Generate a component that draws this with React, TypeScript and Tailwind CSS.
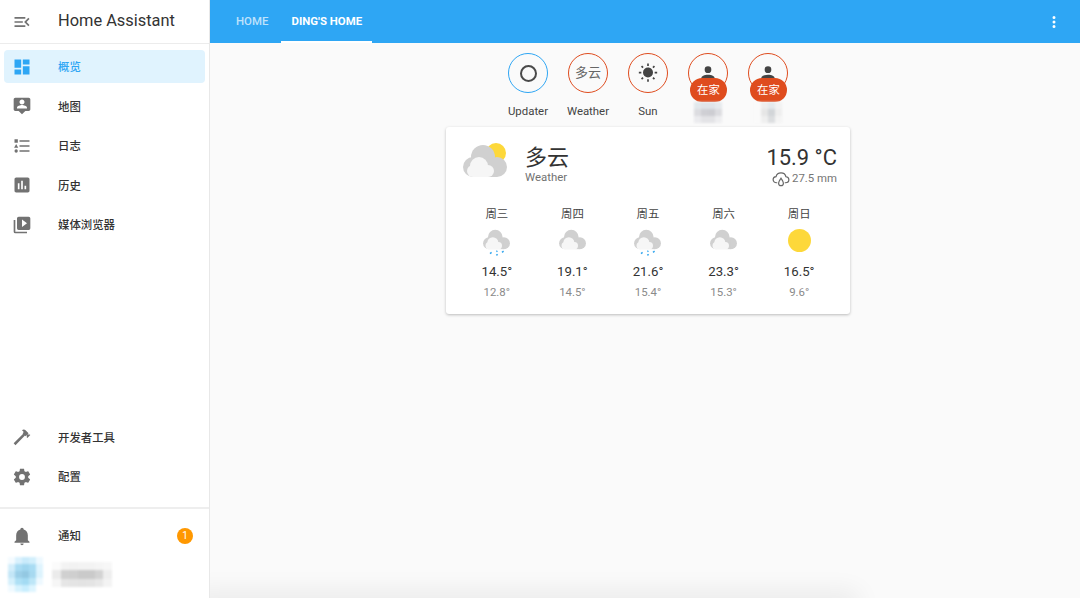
import React from "react";

const FONT = "font-['Roboto','Noto_Sans_CJK_SC',sans-serif]";

const ICONS = {
  menuOpen: "M21,15.61L19.59,17L14.58,12L19.59,7L21,8.39L17.44,12L21,15.61M3,6H16V8H3V6M3,13V11H13V13H3M3,18V16H16V18H3Z",
  dashboard: "M13,3V9H21V3M13,21H21V11H13M3,21H11V15H3M3,13H11V3H3V13Z",
  map: "M20 2H4C2.9 2 2 2.9 2 4V16C2 17.1 2.9 18 4 18H8L12 22L16 18H20C21.1 18 22 17.1 22 16V4C22 2.9 21.1 2 20 2M12 4.3C13.66 4.3 15 5.64 15 7.3C15 8.96 13.66 10.3 12 10.3C10.34 10.3 9 8.96 9 7.3C9 5.64 10.34 4.3 12 4.3M18 15H6V14C6 12 10 10.9 12 10.9C14 10.9 18 12 18 14V15Z",
  logbook: "M5,9.5L7.5,14H2.5L5,9.5M3,4H7V8H3V4M5,20A2,2 0 0,0 7,18A2,2 0 0,0 5,16A2,2 0 0,0 3,18A2,2 0 0,0 5,20M9,5V7H21V5H9M9,19H21V17H9V19M9,13H21V11H9V13Z",
  history: "M19 3H5C3.9 3 3 3.9 3 5V19C3 20.1 3.9 21 5 21H19C20.1 21 21 20.1 21 19V5C21 3.9 20.1 3 19 3M9 17H7V10H9V17M13 17H11V7H13V17M17 17H15V13H17V17Z",
  media: "M4,6H2V20A2,2 0 0,0 4,22H18V20H4V6M20,2H8A2,2 0 0,0 6,4V16A2,2 0 0,0 8,18H20A2,2 0 0,0 22,16V4A2,2 0 0,0 20,2M12,14.5V5.5L18,10L12,14.5Z",
  hammer: "M2 19.63L13.43 8.2L12.72 7.5L14.14 6.07L12 3.89C13.2 2.7 15.09 2.7 16.27 3.89L19.87 7.5L18.45 8.91H21.29L22 9.62L18.45 13.21L17.74 12.5V9.62L16.27 11.04L15.56 10.33L4.13 21.76L2 19.63Z",
  cog: "M12,15.5A3.5,3.5 0 0,1 8.5,12A3.5,3.5 0 0,1 12,8.5A3.5,3.5 0 0,1 15.5,12A3.5,3.5 0 0,1 12,15.5M19.43,12.97C19.47,12.65 19.5,12.33 19.5,12C19.5,11.67 19.47,11.34 19.43,11L21.54,9.37C21.73,9.22 21.78,8.95 21.66,8.73L19.66,5.27C19.54,5.05 19.27,4.96 19.05,5.05L16.56,6.05C16.04,5.66 15.5,5.32 14.87,5.07L14.5,2.42C14.46,2.18 14.25,2 14,2H10C9.75,2 9.54,2.18 9.5,2.42L9.13,5.07C8.5,5.32 7.96,5.66 7.44,6.05L4.95,5.05C4.73,4.96 4.46,5.05 4.34,5.27L2.34,8.73C2.21,8.95 2.27,9.22 2.46,9.37L4.57,11C4.53,11.34 4.5,11.67 4.5,12C4.5,12.33 4.53,12.65 4.57,12.97L2.46,14.63C2.27,14.78 2.21,15.05 2.34,15.27L4.34,18.73C4.46,18.95 4.73,19.03 4.95,18.95L7.44,17.94C7.96,18.34 8.5,18.68 9.13,18.93L9.5,21.58C9.54,21.82 9.75,22 10,22H14C14.25,22 14.46,21.82 14.5,21.58L14.87,18.93C15.5,18.67 16.04,18.34 16.56,17.94L19.05,18.95C19.27,19.03 19.54,18.95 19.66,18.73L21.66,15.27C21.78,15.05 21.73,14.78 21.54,14.63L19.43,12.97Z",
  bell: "M21,19V20H3V19L5,17V11C5,7.9 7.03,5.17 10,4.29C10,4.19 10,4.1 10,4A2,2 0 0,1 12,2A2,2 0 0,1 14,4C14,4.1 14,4.19 14,4.29C16.97,5.17 19,7.9 19,11V17L21,19M14,21A2,2 0 0,1 12,23A2,2 0 0,1 10,21",
  dots: "M12,16A2,2 0 0,1 14,18A2,2 0 0,1 12,20A2,2 0 0,1 10,18A2,2 0 0,1 12,16M12,10A2,2 0 0,1 14,12A2,2 0 0,1 12,14A2,2 0 0,1 10,12A2,2 0 0,1 12,10M12,4A2,2 0 0,1 14,6A2,2 0 0,1 12,8A2,2 0 0,1 10,6A2,2 0 0,1 12,4Z",
  sun: "M3.55,18.54L4.96,19.95L6.76,18.16L5.34,16.74M11,22.45C11.32,22.45 13,22.45 13,22.45V19.5H11M12,5.5A6,6 0 0,0 6,11.5A6,6 0 0,0 12,17.5A6,6 0 0,0 18,11.5C18,8.18 15.31,5.5 12,5.5M20,12.5H23V10.5H20M17.24,18.16L19.04,19.95L20.45,18.54L18.66,16.74M20.45,4.46L19.04,3.05L17.24,4.84L18.66,6.26M13,0.55H11V3.5H13M4,10.5H1V12.5H4M6.76,4.84L4.96,3.05L3.55,4.46L5.34,6.26L6.76,4.84Z",
  account: "M12,4A4,4 0 0,1 16,8A4,4 0 0,1 12,12A4,4 0 0,1 8,8A4,4 0 0,1 12,4M12,14C16.42,14 20,15.79 20,18V20H4V18C4,15.79 7.58,14 12,14Z",
};

function Icon({ d, className }: { d: string; className: string }) {
  return (
    <svg viewBox="0 0 24 24" className={className} fill="currentColor">
      <path d={d} />
    </svg>
  );
}

function NavRow({ icon, label, active, children }: { icon: string; label: string; active?: boolean; children?: React.ReactNode }) {
  return (
    <div className={`mx-1 flex h-[33px] items-center rounded-[4px] pl-[8px] pr-3 ${active ? "bg-[#e0f3fe] text-[#2ea6f4]" : "text-[#333333]"}`}>
      <Icon d={icon} className={`h-5 w-5 shrink-0 ${active ? "text-[#2ea6f4]" : "text-[#727272]"}`} />
      <span className="ml-[26px] pt-[3px] text-[11.4px] font-medium">{label}</span>
      {children}
    </div>
  );
}

// blurred-out text and avatars, built from coarse cells
function Mosaic({ cells, size, className }: { cells: string[][]; size: number; className?: string }) {
  return (
    <div className={`flex flex-col blur-[1px] ${className ?? ""}`}>
      {cells.map((row, y) => (
        <div key={y} className="flex">
          {row.map((c, x) => (
            <div key={x} style={{ width: size, height: size, background: c }} />
          ))}
        </div>
      ))}
    </div>
  );
}

function Cloud({ sun, className }: { sun?: boolean; className: string }) {
  return (
    <svg viewBox="0 0 44 36" className={className}>
      {sun && <circle cx="33" cy="11" r="10" fill="#fdd83a" />}
      <g fill="#d0d0d0">
        <circle cx="20" cy="15" r="12" />
        <circle cx="10" cy="25" r="10" />
        <circle cx="34" cy="25" r="10" />
        <rect x="10" y="20" width="24" height="15" />
      </g>
      <g fill="#f6f6f6">
        <circle cx="16" cy="24" r="9" />
        <circle cx="10" cy="29" r="6" />
        <circle cx="25" cy="29" r="6" />
        <rect x="10" y="26" width="15" height="9" />
      </g>
      <rect x="0" y="35" width="44" height="1" fill="#ffffff" />
    </svg>
  );
}

function ForecastIcon({ kind }: { kind: "rain" | "cloud" | "sun" }) {
  if (kind === "sun") {
    return (
      <div className="flex h-[30px] items-start justify-center pt-[1px]">
        <div className="h-[23px] w-[23px] rounded-full bg-[#fdd83a]" />
      </div>
    );
  }
  return (
    <div className="flex h-[30px] flex-col items-center">
      <Cloud className="h-[22px] w-[27px]" />
      {kind === "rain" && (
        <svg viewBox="0 0 16 6" className="h-[6px] w-[16px]">
          <path d="M1 3.6L2.6 2.4M7.4 5.4L8.6 4.2M13 2.4L14.6 1.2M7.4 1.6L8.4 0.8" stroke="#35a7ee" strokeWidth="1.5" />
        </svg>
      )}
    </div>
  );
}

function Badge({ ring, label, tag, children, blurred }: { ring: string; label?: string; tag?: boolean; children: React.ReactNode; blurred?: string[][] }) {
  return (
    <div className="flex w-[60px] flex-col items-center">
      <div className={`relative flex h-10 w-10 items-center justify-center rounded-full border-[1.5px] ${ring}`}>
        {children}
        {tag && (
          <div className="absolute left-[1px] top-[24px] flex h-[24px] w-[37px] items-center justify-center rounded-full bg-[#df4c1e] pt-[1px] text-[11.4px] text-white">
            在家
          </div>
        )}
      </div>
      {label ? (
        <div className="mt-[11px] text-[11.4px] leading-[15px] text-[#444444]">{label}</div>
      ) : (
        <Mosaic cells={blurred ?? []} size={7} className="mt-[9px]" />
      )}
    </div>
  );
}

const FORECAST = [
  { day: "周三", kind: "rain" as const, hi: "14.5°", lo: "12.8°" },
  { day: "周四", kind: "cloud" as const, hi: "19.1°", lo: "14.5°" },
  { day: "周五", kind: "rain" as const, hi: "21.6°", lo: "15.4°" },
  { day: "周六", kind: "cloud" as const, hi: "23.3°", lo: "15.3°" },
  { day: "周日", kind: "sun" as const, hi: "16.5°", lo: "9.6°" },
];

const AVATAR = [
  ["#f4fbff", "#d9f1fd", "#c9ebfb", "#d2effc", "#eef9ff"],
  ["#d3eefb", "#a9dcf3", "#9fd6ef", "#a9dcf3", "#dff4fe"],
  ["#c3e6f7", "#9ccfe8", "#93c8e2", "#a7d9f0", "#dcf3fd"],
  ["#d5f0fc", "#aee0f5", "#a3dbf3", "#bde6f7", "#eef9ff"],
  ["#f0faff", "#d6f2fe", "#c8eefe", "#def5ff", "#ffffff"],
];

const NAME = [
  ["#fbfbfb", "#f3f3f3", "#f2f2f2", "#f3f3f3", "#f3f3f3", "#f5f5f5", "#f7f7f7"],
  ["#ebebeb", "#d0d0d0", "#cfcfcf", "#cacaca", "#cacaca", "#d3d3d3", "#eeeeee"],
  ["#f6f6f6", "#e6e6e6", "#e4e4e4", "#e3e3e3", "#e4e4e4", "#e8e8e8", "#f3f3f3"],
];

const NAME_A = [
  ["#e2e8ec", "#dfe4e9", "#dfe4e9", "#e6eaed"],
  ["#dcdce0", "#cfcfd4", "#cdcdd2", "#dcdce0"],
  ["#ebebee", "#e3e3e6", "#e3e3e6", "#eeeef0"],
];

const NAME_B = [
  ["#fafafa", "#eeeeee", "#e4e9ec", "#f2f2f2"],
  ["#fafafa", "#e6e6e6", "#d2d5d8", "#eeeeee"],
  ["#fafafa", "#efefef", "#dcdee0", "#f4f4f4"],
];

export default function App() {
  return (
    <div className={`${FONT} relative flex h-[598px] w-[1080px] overflow-hidden bg-[#fafafa]`}>
      {/* SIDEBAR */}
      <aside className="relative z-10 flex w-[210px] shrink-0 flex-col border-r border-[#e8e8e8] bg-white">
        <div className="flex h-[44px] shrink-0 items-center border-b border-[#ececec] pl-[12px]">
          <Icon d={ICONS.menuOpen} className="h-5 w-5 text-[#727272]" />
          <span className="ml-[26px] text-[16.4px] text-[#333333]">Home Assistant</span>
        </div>

        <nav className="mt-[6px] flex flex-col gap-[6.5px]">
          <NavRow icon={ICONS.dashboard} label="概览" active />
          <NavRow icon={ICONS.map} label="地图" />
          <NavRow icon={ICONS.logbook} label="日志" />
          <NavRow icon={ICONS.history} label="历史" />
          <NavRow icon={ICONS.media} label="媒体浏览器" />
        </nav>

        <div className="mt-auto flex flex-col gap-[6.5px] pb-[14px]">
          <NavRow icon={ICONS.hammer} label="开发者工具" />
          <NavRow icon={ICONS.cog} label="配置" />
        </div>
        <div className="h-[2px] bg-[#eeeeee]" />
        <div className="mt-[10px]">
          <NavRow icon={ICONS.bell} label="通知">
            <span className="ml-auto flex h-4 w-4 items-center justify-center rounded-full bg-[#ff9800] text-[10px] text-white">1</span>
          </NavRow>
        </div>
        <div className="mb-[6px] mt-[5px] flex items-center pl-[8px]">
          <Mosaic cells={AVATAR} size={7} />
          <Mosaic cells={NAME} size={8.5} className="ml-[9px]" />
        </div>
      </aside>

      <div className="flex min-w-0 flex-1 flex-col">
        {/* HEADER */}
        <header className="flex h-[43px] shrink-0 items-center bg-[#2ea6f4] pr-[17px] text-white">
          <div className="flex h-full items-center pl-[26px] pr-[13px] text-[11.4px] font-medium text-white/70">HOME</div>
          <div className="relative flex h-full w-[91px] items-center justify-center text-[11.4px] font-bold">
            DING'S HOME
            <div className="absolute bottom-0 left-0 right-0 h-[2px] bg-white" />
          </div>
          <Icon d={ICONS.dots} className="ml-auto h-[18px] w-[18px]" />
        </header>

        {/* MAIN */}
        <main className="flex flex-col items-center pl-[6px]">
          <div className="mt-[10px] flex h-[74px] justify-center">
            <Badge ring="border-[#2ea6f4]" label="Updater">
              <div className="h-[17px] w-[17px] rounded-full border-2 border-[#4a4a4a]" />
            </Badge>
            <Badge ring="border-[#df4c1e]" label="Weather">
              <span className="text-[13px] text-[#666666]">多云</span>
            </Badge>
            <Badge ring="border-[#df4c1e]" label="Sun">
              <Icon d={ICONS.sun} className="h-5 w-5 text-[#444444]" />
            </Badge>
            <Badge ring="border-[#df4c1e]" tag blurred={NAME_A}>
              <Icon d={ICONS.account} className="h-5 w-5 text-[#444444]" />
            </Badge>
            <Badge ring="border-[#df4c1e]" tag blurred={NAME_B}>
              <Icon d={ICONS.account} className="h-5 w-5 text-[#444444]" />
            </Badge>
          </div>

          <section className="w-[404px] rounded-[3px] bg-white px-[13px] shadow-[0_1px_3px_rgba(0,0,0,0.25)]">
            <div className="flex h-[55px] items-start justify-between pt-[15px]">
              <div className="flex">
                <Cloud sun className="ml-[4px] h-[36px] w-[44px]" />
                <div className="ml-[18px] mt-[2px] flex flex-col">
                  <span className="text-[22px] leading-[28px] text-[#333333]">多云</span>
                  <span className="text-[11.4px] leading-[10px] text-[#727272]">Weather</span>
                </div>
              </div>
              <div className="mt-[2px] flex flex-col items-end">
                <span className="text-[21.9px] leading-[28px] text-[#333333]">15.9 °C</span>
                <div className="-mt-[1px] flex h-[15px] items-center text-[11.4px] text-[#757575]">
                  <svg viewBox="0 0 24 24" className="mr-[2px] h-[18px] w-[18px]" fill="none" stroke="#666666" strokeWidth="1.6">
                    <path d="M7 17H6C3.5 17 1.5 15 1.5 12.8C1.5 10.6 3.2 9 5.4 8.8C6.2 5.8 8.8 3.8 12 3.8C15.4 3.8 18 6.2 18.6 9C20.8 9.2 22.5 10.8 22.5 13C22.5 15 21 17 18 17H17" />
                    <path d="M12 11C10.5 13.5 8.8 15.2 8.8 17.5C8.8 19.3 10.2 20.8 12 20.8C13.8 20.8 15.2 19.3 15.2 17.5C15.2 15.2 13.5 13.5 12 11Z" />
                  </svg>
                  27.5 mm
                </div>
              </div>
            </div>

            <div className="mt-[24px] grid grid-cols-5 pb-[12px]">
              {FORECAST.map((f) => (
                <div key={f.day} className="flex flex-col items-center">
                  <div className="text-[11.4px] leading-[16px] text-[#444444]">{f.day}</div>
                  <div className="mt-[6px]">
                    <ForecastIcon kind={f.kind} />
                  </div>
                  <div className="mt-[4px] text-[13.2px] leading-[20px] text-[#333333]">{f.hi}</div>
                  <div className="text-[11.4px] leading-[20px] text-[#8a8a8a]">{f.lo}</div>
                </div>
              ))}
            </div>
          </section>
        </main>
      </div>

      {/* soft shadow from the off-screen card below the fold */}
      <div className="pointer-events-none absolute left-[200px] top-[600px] h-[10px] w-[650px] shadow-[0_0_26px_8px_rgba(0,0,0,0.07)]" />
    </div>
  );
}
